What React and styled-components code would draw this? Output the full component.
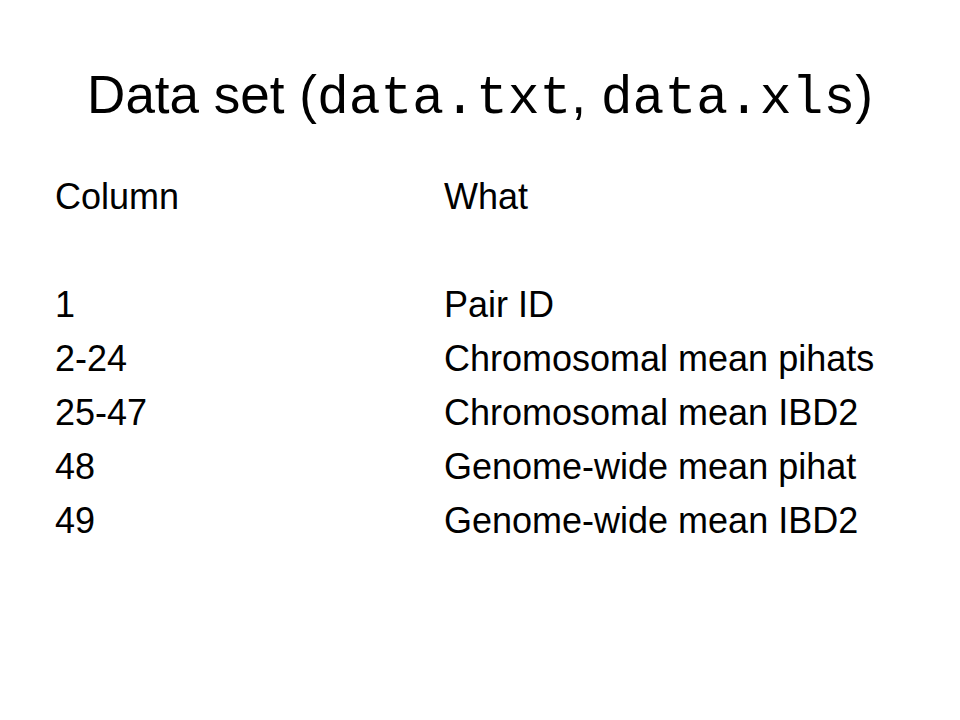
import React from 'react';
import styled, { createGlobalStyle } from 'styled-components';

const GlobalStyle = createGlobalStyle`
    html, body {
        margin: 0;
        padding: 0;
        background: #ffffff;
    }
`;

const Slide = styled.div`
    width: 960px;
    height: 720px;
    box-sizing: border-box;
    padding-top: 63px;
    background: #ffffff;
    color: #000000;
    font-family: "Liberation Sans", Arial, sans-serif;
    overflow: hidden;
`;

const Title = styled.h1`
    margin: 0;
    font-weight: normal;
    font-size: 53px;
    line-height: 64px;
    text-align: center;
`;

const Code = styled.span`
    font-family: "Liberation Mono", "Courier New", monospace;
`;

const Table = styled.div`
    margin-top: 39px;
    padding-left: 55px;
    display: grid;
    grid-template-columns: 389px 1fr;
    font-size: 36px;
    line-height: 54px;
`;

const Cell = styled.div`
    white-space: nowrap;
`;

const Spacer = styled.div`
    grid-column: 1 / -1;
    height: 54px;
`;

const rows = [
    ['1', 'Pair ID'],
    ['2-24', 'Chromosomal mean pihats'],
    ['25-47', 'Chromosomal mean IBD2'],
    ['48', 'Genome-wide mean pihat'],
    ['49', 'Genome-wide mean IBD2'],
];

export default function App() {
    return (
        <>
            <GlobalStyle />
            <Slide>
                <Title>
                    Data set (<Code>data.txt</Code>, <Code>data.xls</Code>)
                </Title>
                <Table>
                    <Cell>Column</Cell>
                    <Cell>What</Cell>
                    <Spacer />
                    {rows.map(([col, what]) => (
                        <React.Fragment key={col}>
                            <Cell>{col}</Cell>
                            <Cell>{what}</Cell>
                        </React.Fragment>
                    ))}
                </Table>
            </Slide>
        </>
    );
}
